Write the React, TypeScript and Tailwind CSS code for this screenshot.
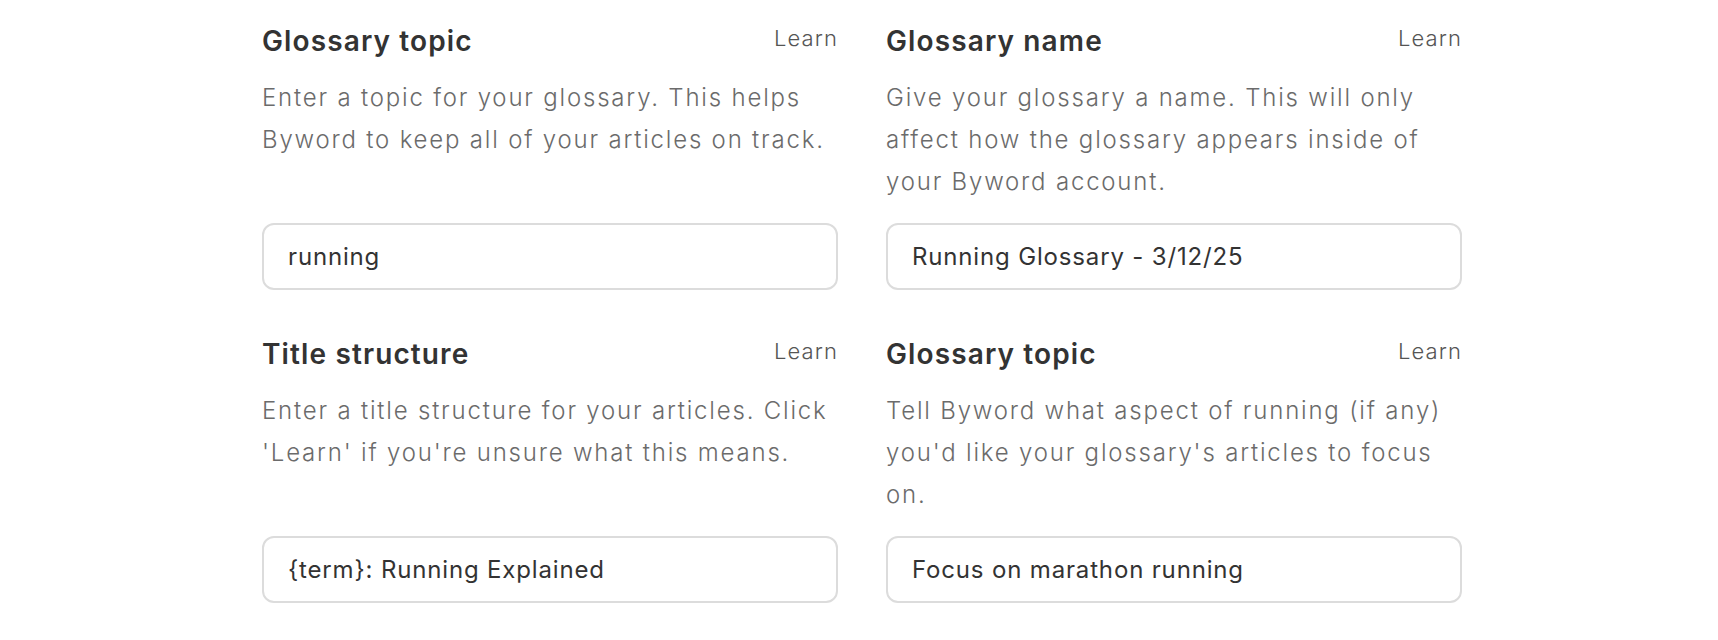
const fields = [
  {
    title: "Glossary topic",
    description: "Enter a topic for your glossary. This helps Byword to keep all of your articles on track.",
    value: "running",
  },
  {
    title: "Glossary name",
    description: "Give your glossary a name. This will only affect how the glossary appears inside of your Byword account.",
    value: "Running Glossary - 3/12/25",
  },
  {
    title: "Title structure",
    description: "Enter a title structure for your articles. Click 'Learn' if you're unsure what this means.",
    value: "{term}: Running Explained",
  },
  {
    title: "Glossary topic",
    description: "Tell Byword what aspect of running (if any) you'd like your glossary's articles to focus on.",
    value: "Focus on marathon running",
  },
];

export default function App() {
  return (
    <div className="flex min-h-screen items-start justify-center bg-white pl-[6px] font-['Inter','Liberation_Sans',sans-serif]">
      <div className="grid w-[1200px] grid-cols-2 gap-x-12 gap-y-[46px] pt-[23px]">
        {fields.map((field, idx) => (
          <div key={idx} className="flex flex-col">
            <div className="flex items-start justify-between">
              <h2 className="text-[28px] leading-[36px] font-semibold tracking-[0.04em] text-[#333333]">
                {field.title}
              </h2>
              <button className="mt-[1px] text-[22px] leading-[28px] font-light tracking-[0.05em] text-[#555555]">
                Learn
              </button>
            </div>
            <p className="mt-[18px] mb-5 text-[24px] leading-[42px] font-light tracking-[0.075em] text-[#6b6b6b]">
              {field.description}
            </p>
            <input
              defaultValue={field.value}
              className="mt-auto h-[67px] w-full rounded-[12px] border-2 border-[#dcdcdc] px-6 text-[24px] tracking-[0.035em] text-[#333333] outline-none"
            />
          </div>
        ))}
      </div>
    </div>
  );
}
